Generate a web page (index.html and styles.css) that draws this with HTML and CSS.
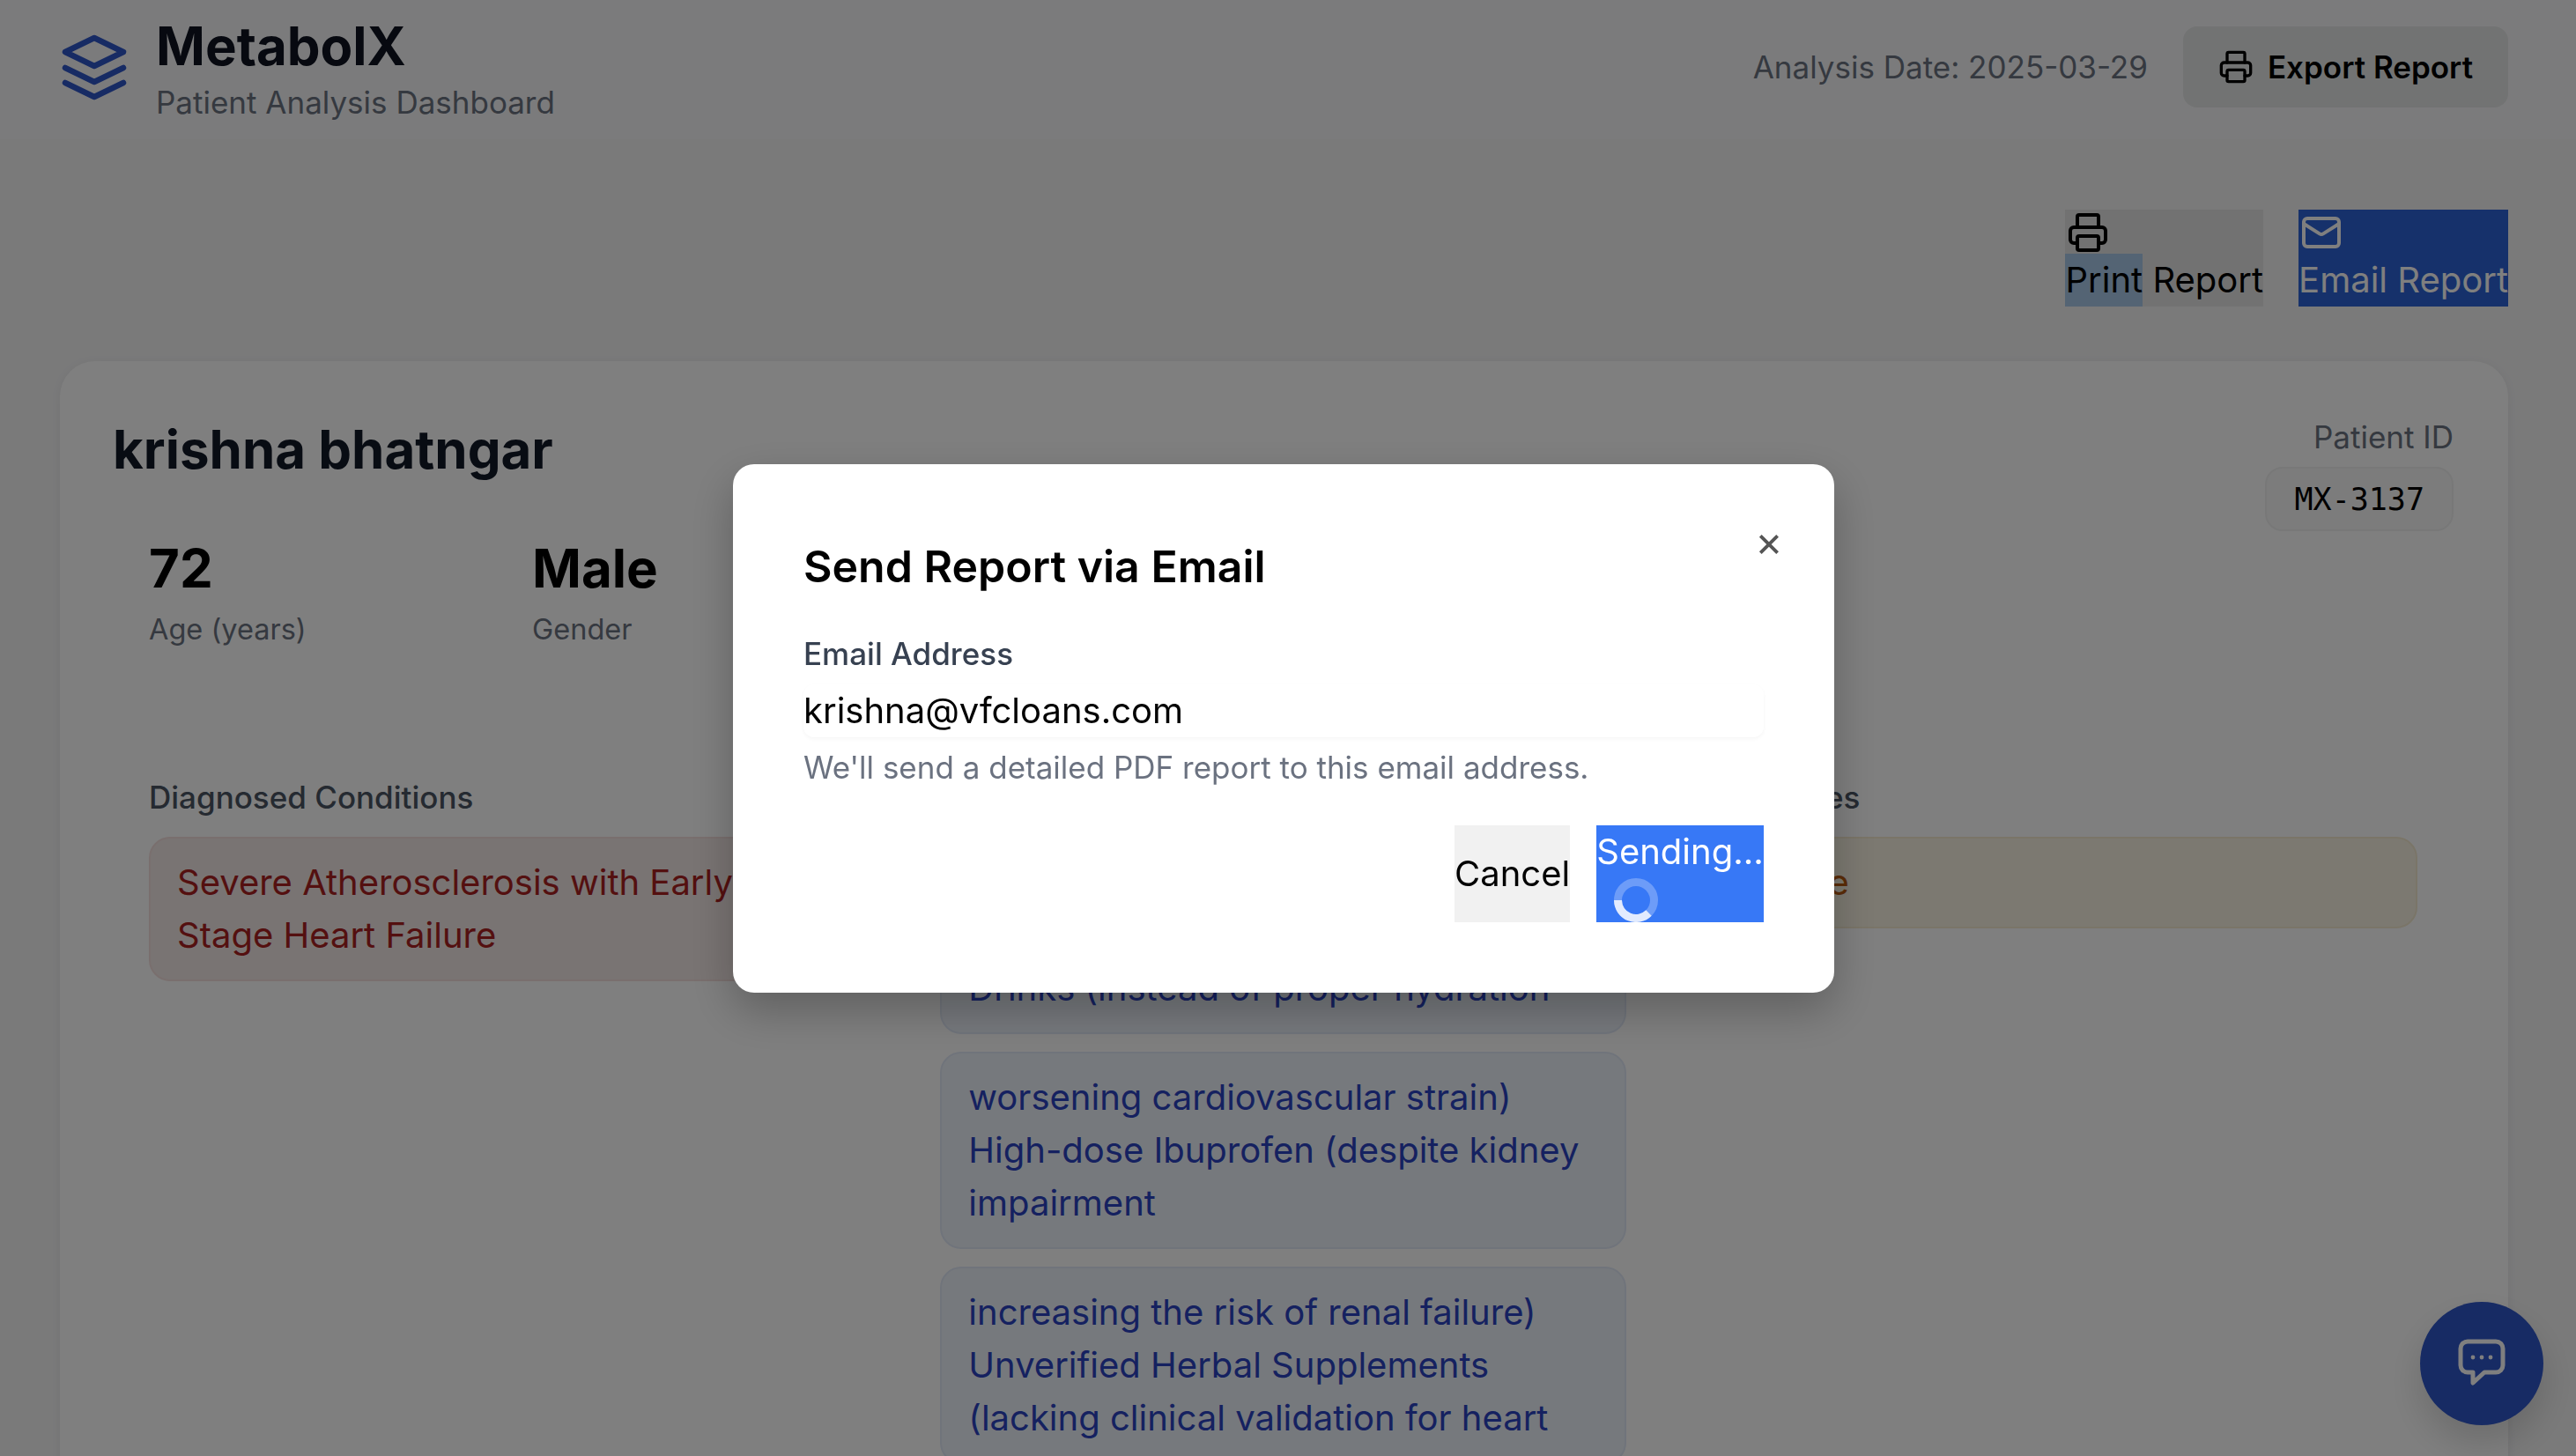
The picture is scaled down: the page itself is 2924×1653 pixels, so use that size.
FILE: index.html
```html
<!DOCTYPE html>
<html lang="en">
<head>
<meta charset="utf-8">
<title>MetabolX</title>
<link rel="stylesheet" href="styles.css">
</head>
<body>
<div class="page">
  <header class="topbar">
    <div class="brand">
      <svg class="logo" viewBox="0 0 80 80" fill="none" stroke="currentColor" stroke-width="6.5" stroke-linecap="round" stroke-linejoin="round"><path d="M39 7 72 23 39 39 6 23Z"/><path d="M6 41 39 57 72 41"/><path d="M6 58 39 74 72 58"/></svg>
      <div>
        <h1 class="brand-name">MetabolX</h1>
        <p class="brand-sub">Patient Analysis Dashboard</p>
      </div>
    </div>
    <div class="top-actions">
      <span class="date">Analysis Date: 2025-03-29</span>
      <button class="export">
        <svg class="ic-40" viewBox="0 0 24 24" fill="none" stroke="currentColor" stroke-width="2" stroke-linecap="round" stroke-linejoin="round"><path d="M6 18H4a2 2 0 0 1-2-2v-5a2 2 0 0 1 2-2h16a2 2 0 0 1 2 2v5a2 2 0 0 1-2 2h-2"/><path d="M6 9V3a1 1 0 0 1 1-1h10a1 1 0 0 1 1 1v6"/><rect x="6" y="14" width="12" height="8" rx="1"/></svg>
        <span>Export Report</span>
      </button>
    </div>
  </header>

  <div class="report-actions">
    <button class="raw-btn raw-print">
      <svg class="ic-48" viewBox="0 0 24 24" fill="none" stroke="currentColor" stroke-width="2" stroke-linecap="round" stroke-linejoin="round"><path d="M6 18H4a2 2 0 0 1-2-2v-5a2 2 0 0 1 2-2h16a2 2 0 0 1 2 2v5a2 2 0 0 1-2 2h-2"/><path d="M6 9V3a1 1 0 0 1 1-1h10a1 1 0 0 1 1 1v6"/><rect x="6" y="14" width="12" height="8" rx="1"/></svg>
      <span class="raw-label"><span class="selected">Print</span> Report</span>
    </button>
    <button class="raw-btn raw-email">
      <svg class="ic-48" viewBox="0 0 24 24" fill="none" stroke="currentColor" stroke-width="2" stroke-linecap="round" stroke-linejoin="round"><rect x="2" y="4" width="20" height="16" rx="2"/><path d="m22 7-8.97 5.7a1.94 1.94 0 0 1-2.06 0L2 7"/></svg>
      <span class="raw-label">Email Report</span>
    </button>
  </div>

  <main class="card">
    <div class="card-head">
      <h2 class="patient-name">krishna bhatngar</h2>
      <div class="patient-id">
        <span class="pid-label">Patient ID</span>
        <code class="pid-value">MX-3137</code>
      </div>
    </div>

    <div class="stats">
      <div><div class="stat-value">72</div><div class="stat-label">Age (years)</div></div>
      <div><div class="stat-value">Male</div><div class="stat-label">Gender</div></div>
    </div>

    <div class="columns">
      <section>
        <h3 class="col-title">Diagnosed Conditions</h3>
        <div class="item item-red">Severe Atherosclerosis with Early Stage Heart Failure</div>
      </section>
      <section>
        <h3 class="col-title">Current Medications</h3>
        <div class="item item-blue">Over-the-counter Stimulants and High-Caffeine Pre-Workout Energy Drinks (instead of proper hydration</div>
        <div class="item item-blue">worsening cardiovascular strain) High-dose Ibuprofen (despite kidney impairment</div>
        <div class="item item-blue">increasing the risk of renal failure) Unverified Herbal Supplements (lacking clinical validation for heart</div>
      </section>
      <section>
        <h3 class="col-title">Allergies</h3>
        <div class="item item-amber">None</div>
      </section>
    </div>
  </main>
</div>

<button class="chat-fab" aria-label="Open chat">
  <svg viewBox="0 0 56 56" fill="none" stroke="currentColor" stroke-width="5" stroke-linecap="round" stroke-linejoin="round"><path d="M12 3h32a8 8 0 0 1 8 8v19a8 8 0 0 1-8 8H31L18 50V38h-6a8 8 0 0 1-8-8V11a8 8 0 0 1 8-8Z"/><circle class="dot" cx="18" cy="21" r="2.4"/><circle class="dot" cx="28" cy="21" r="2.4"/><circle class="dot" cx="38" cy="21" r="2.4"/></svg>
</button>

<div class="overlay">
  <div class="modal">
    <button class="close" aria-label="Close">×</button>
    <h2 class="modal-title">Send Report via Email</h2>
    <label class="field-label" for="email">Email Address</label>
    <input class="field-input" id="email" type="email" value="krishna@vfcloans.com">
    <p class="field-help">We'll send a detailed PDF report to this email address.</p>
    <div class="modal-actions">
      <button class="btn-cancel">Cancel</button>
      <button class="btn-send">
        <span class="send-text">Sending...</span>
        <svg class="spinner" viewBox="0 0 50 50" fill="none"><circle class="spin-track" cx="25" cy="25" r="20.5" stroke-width="9"/><path class="spin-arc" d="M4.5 25A20.5 20.5 0 0 0 39.5 39.5" stroke-width="9"/></svg>
      </button>
    </div>
  </div>
</div>
</body>
</html>
```

FILE: styles.css
```css
* { box-sizing: border-box; }
html, body { margin: 0; height: 100%; overflow: hidden; }
body { background: #f4f4f5; color: #111827; font-family: Inter, "Liberation Sans", sans-serif; }
h1, h2, h3, p { margin: 0; }
button { font-family: inherit; border: 0; }

.page { height: 1653px; overflow: hidden; }

.topbar {
  height: 158px; padding: 16px 77px 0 68px;
  display: flex; justify-content: space-between; align-items: flex-start;
  background: #f7f7f8;
}
.brand { display: flex; gap: 29px; }
.logo { width: 80px; height: 80px; margin-top: 20px; color: #2f56c8; flex: none; }
.brand-name { font-size: 60px; line-height: 72px; font-weight: 700; color: #0e1320; }
.brand-sub { font-size: 35px; line-height: 56px; color: #6b7280; }
.top-actions { display: flex; align-items: center; gap: 40px; margin-top: 14px; }
.date { font-size: 35px; line-height: 56px; color: #6b7280; }
.export {
  display: flex; align-items: center; gap: 16px;
  height: 92px; padding: 0 40px; border-radius: 16px;
  background: #e5e6e7; color: #000; font-size: 35px; font-weight: 600;
}
.ic-40 { width: 40px; height: 40px; }
.ic-48 { width: 48px; height: 48px; display: block; margin-left: 2px; }

.report-actions { display: flex; justify-content: flex-end; gap: 40px; margin: 80px 77px 62px 0; }
.raw-btn { display: block; padding: 2px 0 0; font-size: 40px; line-height: 60px; text-align: left; }
.raw-label { display: block; }
.raw-print { background: #e4e4e5; color: #000; }
.raw-email { background: #2c62d6; color: #fff; }
.selected { display: inline-block; background: #a8c8e8; }

.card {
  margin: 0 77px 0 68px; padding: 60px 62px 60px 60px;
  background: #fff; border-radius: 40px;
  box-shadow: 0 2px 12px rgba(0,0,0,.06);
}
.card-head { display: flex; justify-content: space-between; align-items: flex-start; height: 140px; }
.patient-name { font-size: 60px; line-height: 72px; font-weight: 700; color: #111827; margin-top: 4px; }
.patient-id { display: flex; flex-direction: column; align-items: flex-end; }
.pid-label { font-size: 35px; line-height: 52px; color: #6b7280; }
.pid-value {
  margin-top: 8px; height: 73px; padding: 0 31px; display: flex; align-items: center;
  font-family: "DejaVu Sans Mono", "Liberation Mono", monospace; font-size: 35px;
  background: #f8f9f9; border: 2px solid #f0f1f1; border-radius: 20px; color: #000;
}

.stats { display: grid; grid-template-columns: 435px 435px; padding: 0 41px; margin-top: -1px; }
.stat-value { font-size: 60px; line-height: 72px; font-weight: 700; color: #000; }
.stat-label { font-size: 32.5px; line-height: 48px; margin-top: 10px; color: #6b7280; }

.columns { display: grid; grid-template-columns: repeat(3, 1fr); gap: 120px; padding: 0 41px; margin-top: 138px; }
.col-title { font-size: 35px; line-height: 56px; font-weight: 500; color: #4b5563; margin-bottom: 17px; }
.item { padding: 20px 30px; margin-bottom: 20px; font-size: 40px; line-height: 60px; border: 2px solid; border-radius: 24px; }
.item-red { background: #f3e8e6; border-color: #f2dedc; color: #a82020; }
.item-blue { background: #edf2fa; border-color: #e0e8f6; color: #2a42c0; }
.item-amber { background: #f9f3e3; border-color: #f4ead0; color: #b85a10; }

.chat-fab {
  position: fixed; right: 37px; top: 1478px; width: 140px; height: 140px; padding: 0;
  border-radius: 50%; background: #2f56c8; color: #fff;
  display: flex; align-items: center; justify-content: center;
  box-shadow: 0 20px 40px rgba(0,0,0,.15);
}
.chat-fab svg { width: 56px; height: 56px; }
.chat-fab .dot { fill: currentColor; stroke: none; }

.overlay {
  position: fixed; inset: 0; background: rgba(0,0,0,.5);
  display: flex; align-items: center; justify-content: center; padding-right: 10px;
}
.modal {
  position: relative; width: 1250px; height: 600px; padding: 80px 80px;
  background: #fff; border-radius: 24px; box-shadow: 0 20px 50px rgba(0,0,0,.25);
}
.close {
  position: absolute; top: 64px; right: 50px; width: 48px; height: 48px; padding: 0;
  background: none; color: #555; font-size: 48px; line-height: 48px;
}
.modal-title { font-size: 50px; line-height: 72px; font-weight: 600; color: #000; margin-bottom: 35px; }
.field-label { display: block; font-size: 35px; line-height: 56px; font-weight: 500; color: #374151; margin-bottom: 7px; }
.field-input {
  display: block; width: 100%; height: 60px; padding: 0; border: 0; outline: 0;
  font: 400 40px/60px Inter, "Liberation Sans", sans-serif; color: #000;
  background: #fff; border-radius: 12px; box-shadow: 0 2px 4px rgba(0,0,0,.04);
}
.field-help { margin-top: 6px; font-size: 35px; line-height: 56px; color: #6b7280; }
.modal-actions { display: flex; justify-content: flex-end; gap: 30px; margin-top: 38px; height: 110px; }
.btn-cancel { width: 131px; padding: 0; background: #f1f1f1; color: #000; font-size: 40px; }
.btn-send { width: 190px; padding: 0; background: #3778f6; color: #fff; font-size: 40px; line-height: 60px; display: block; text-align: left; }
.send-text { display: block; text-align: center; }
.spinner { display: block; width: 50px; height: 50px; margin-left: 20px; }
.spin-track { stroke: rgba(255,255,255,.27); }
.spin-arc { stroke: rgba(255,255,255,.8); }
```
